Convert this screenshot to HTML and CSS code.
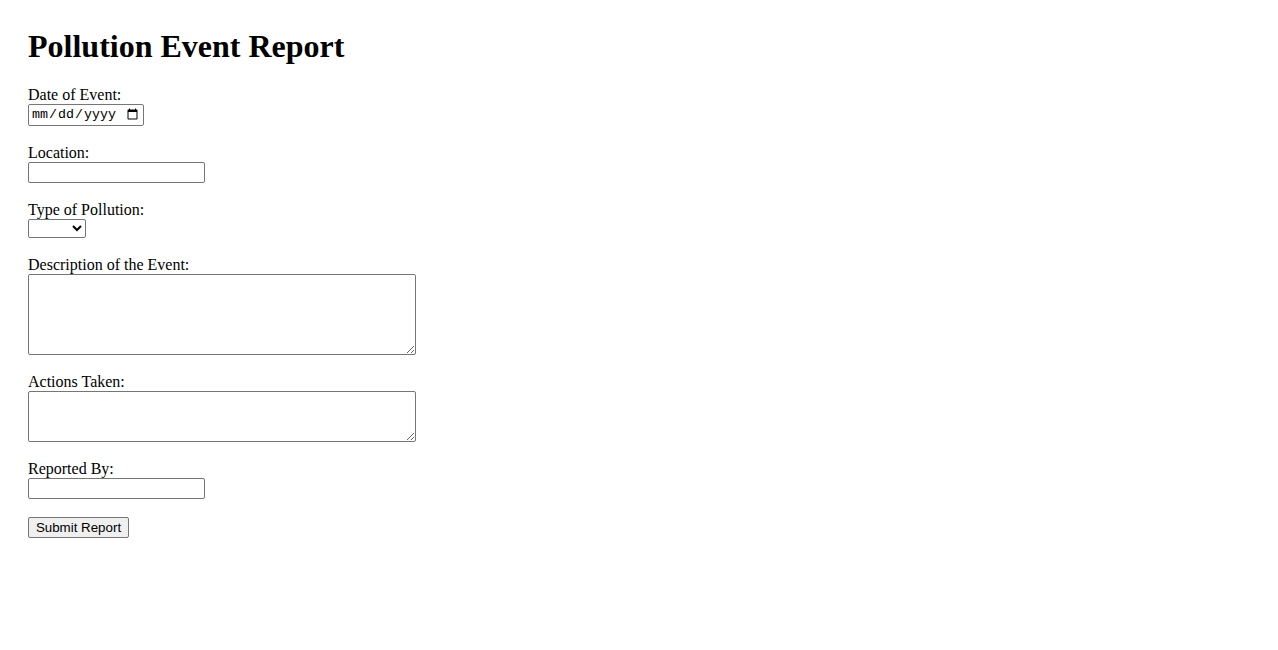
FILE: index.html
```html
<!DOCTYPE html>
<html lang="en">
<head>
<meta charset="utf-8">
<title>Pollution Event Report</title>
<link rel="stylesheet" href="styles.css">
</head>
<body>
<main class="page">
  <h1 class="title">Pollution Event Report</h1>
  <form class="report-form">
    <div class="field">
      <label class="field-label" for="date">Date of Event:</label>
      <input class="control date-input" type="date" id="date" name="date">
    </div>
    <div class="field">
      <label class="field-label" for="location">Location:</label>
      <input class="control text-input" type="text" id="location" name="location">
    </div>
    <div class="field">
      <label class="field-label" for="type">Type of Pollution:</label>
      <select class="control select-input" id="type" name="type">
        <option value=""></option>
        <option value="air">Air</option>
        <option value="water">Water</option>
        <option value="soil">Soil</option>
        <option value="noise">Noise</option>
      </select>
    </div>
    <div class="field">
      <label class="field-label" for="description">Description of the Event:</label>
      <textarea class="control textarea textarea-tall" id="description" name="description"></textarea>
    </div>
    <div class="field">
      <label class="field-label" for="actions">Actions Taken:</label>
      <textarea class="control textarea textarea-short" id="actions" name="actions"></textarea>
    </div>
    <div class="field">
      <label class="field-label" for="reporter">Reported By:</label>
      <input class="control text-input" type="text" id="reporter" name="reporter">
    </div>
    <div class="field">
      <button class="submit-button" type="submit">Submit Report</button>
    </div>
  </form>
</main>
</body>
</html>
```

FILE: styles.css
```css
html {
  background: #ffffff;
}

body {
  margin: 0;
  padding: 28px;
  font-family: "Liberation Serif", "Times New Roman", serif;
  font-size: 16px;
  color: #000000;
}

.page {
  display: flex;
  flex-direction: column;
  align-items: flex-start;
}

.title {
  margin: 0 0 21px;
  font-size: 32px;
  font-weight: bold;
  line-height: 37px;
}

.report-form {
  display: flex;
  flex-direction: column;
  align-items: flex-start;
  gap: 18px;
}

.field {
  display: flex;
  flex-direction: column;
  align-items: flex-start;
}

.field-label {
  display: block;
  line-height: 18px;
}

.control {
  box-sizing: border-box;
  margin: 0;
  border: 1px solid #767676;
  border-radius: 2px;
  background: #ffffff;
  font-family: "Liberation Sans", Arial, sans-serif;
  font-size: 13.333px;
}

.date-input {
  width: 116px;
  height: 22px;
  padding: 1px 2px;
  font-family: "Liberation Mono", "Courier New", monospace;
}

.text-input {
  width: 177px;
  height: 21px;
  padding: 1px 2px;
}

.select-input {
  width: 58px;
  height: 19px;
  padding: 0;
}

.textarea {
  width: 388px;
  padding: 2px;
  resize: both;
  font-family: "Liberation Mono", monospace;
}

.textarea-tall {
  height: 81px;
}

.textarea-short {
  height: 51px;
}

.submit-button {
  box-sizing: border-box;
  width: 101px;
  height: 21px;
  margin: 0;
  padding: 1px 6px;
  border: 1px solid #767676;
  border-radius: 2px;
  background: #efefef;
  font-family: "Liberation Sans", Arial, sans-serif;
  font-size: 13.333px;
  color: #000000;
}
```
